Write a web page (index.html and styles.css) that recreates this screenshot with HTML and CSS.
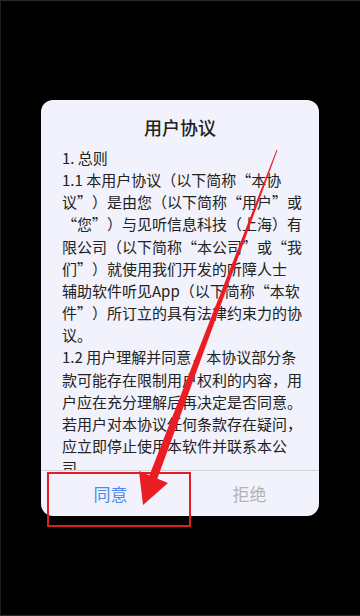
FILE: index.html
```html
<!DOCTYPE html>
<html lang="zh-CN">
<head>
<meta charset="utf-8">
<link rel="stylesheet" href="styles.css">
</head>
<body>
<div class="screen">
  <div class="dialog">
    <div class="title">用户协议</div>
    <div class="content">
      <p>1. 总则</p>
      <p>1.1 本用户协议（以下简称“本协<br>议”）是由您（以下简称“用户”或<br>“您”）与见听信息科技（上海）有<br>限公司（以下简称“本公司”或“我<br>们”）就使用我们开发的听障人士<br>辅助软件听见App（以下简称“本软<br>件”）所订立的具有法律约束力的协<br>议。</p>
      <p>1.2 用户理解并同意，本协议部分条<br>款可能存在限制用户权利的内容，用<br>户应在充分理解后再决定是否同意。<br>若用户对本协议任何条款存在疑问，<br>应立即停止使用本软件并联系本公<br>司。</p>
    </div>
    <div class="actions">
      <div class="btn agree">同意</div>
      <div class="btn refuse">拒绝</div>
    </div>
  </div>
  <div class="mark-box"></div>
  <svg class="arrow" width="360" height="616" viewBox="0 0 360 616">
    <polygon points="276.5,150 277.5,150 157,479.5 149,476.5" fill="#ea1c24"/>
    <polygon points="139,471 168,483 143,505" fill="#ea1c24"/>
  </svg>
</div>
</body>
</html>
```
FILE: styles.css
```css
html, body {
  margin: 0;
  padding: 0;
  background: #000;
}
.screen {
  position: relative;
  width: 360px;
  height: 616px;
  box-sizing: border-box;
  padding-top: 100px;
  display: flex;
  justify-content: center;
  align-items: flex-start;
  background: #000;
  border-top: 1px solid #2a2a2a;
  border-left: 1px solid #1e1e1e;
  border-bottom: 1px solid #2a2a2a;
  font-family: "Noto Sans CJK SC", "Noto Sans", sans-serif;
  text-spacing-trim: space-all;
}
.dialog {
  width: 278px;
  height: 416px;
  margin-top: -1px;
  margin-left: -1px;
  background: #f1f2fb;
  border-radius: 12px;
  display: flex;
  flex-direction: column;
  overflow: hidden;
}
.title {
  height: 47px;
  box-sizing: border-box;
  padding-top: 15px;
  text-align: center;
  font-size: 18px;
  line-height: 24px;
  font-weight: 500;
  color: #222;
}
.content {
  height: 323px;
  overflow: hidden;
  padding: 0 17px 0 21px;
  font-size: 15px;
  line-height: 22.15px;
  color: #222;
  white-space: nowrap;
  border-bottom: 1px solid #d4d5dc;
}
.content p {
  margin: 0;
}
.actions {
  flex: 1;
  display: flex;
}
.btn {
  flex: 1;
  display: flex;
  align-items: center;
  justify-content: center;
  font-size: 17px;
}
.agree {
  color: #4c88ef;
}
.refuse {
  color: #b3b3b6;
}
.mark-box {
  position: absolute;
  left: 46px;
  top: 471px;
  width: 140px;
  height: 51px;
  border: 2px solid #e21d25;
}
.arrow {
  position: absolute;
  left: -1px;
  top: -1px;
}
```
